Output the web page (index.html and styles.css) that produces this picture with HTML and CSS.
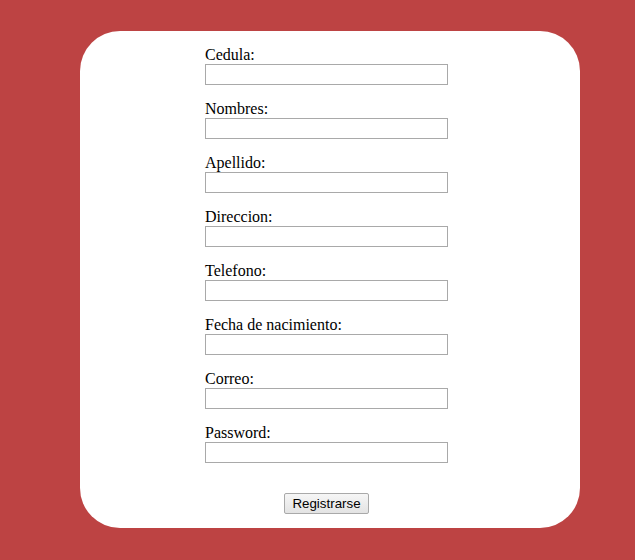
FILE: index.html
```html
<!DOCTYPE html>
<html>
<head>
<meta charset="utf-8">
<link rel="stylesheet" href="styles.css">
</head>
<body>
<div class="card">
  <form class="form">
    <div class="field"><label class="lbl">Cedula:</label><input class="inp" type="text"></div>
    <div class="field"><label class="lbl">Nombres:</label><input class="inp" type="text"></div>
    <div class="field"><label class="lbl">Apellido:</label><input class="inp" type="text"></div>
    <div class="field"><label class="lbl">Direccion:</label><input class="inp" type="text"></div>
    <div class="field"><label class="lbl">Telefono:</label><input class="inp" type="text"></div>
    <div class="field"><label class="lbl">Fecha de nacimiento:</label><input class="inp" type="text"></div>
    <div class="field"><label class="lbl">Correo:</label><input class="inp" type="text"></div>
    <div class="field"><label class="lbl">Password:</label><input class="inp" type="password"></div>
    <div class="actions"><button class="btn" type="button">Registrarse</button></div>
  </form>
</div>
</body>
</html>
```
FILE: styles.css
```css
html, body {
  margin: 0;
  padding: 0;
  background: #bd4343;
  height: 100%;
}
body {
  padding-top: 31px;
  box-sizing: border-box;
  font-family: "Liberation Serif", "Times New Roman", serif;
  font-size: 16px;
  color: #000;
}
.card {
  margin-left: 80px;
  width: 500px;
  height: 497px;
  box-sizing: border-box;
  background: #fff;
  border-radius: 40px;
  padding: 15px 0 0 125px;
}
.form {
  width: 243px;
  display: flex;
  flex-direction: column;
  gap: 15px;
  margin: 0;
}
.field {
  display: flex;
  flex-direction: column;
}
.lbl {
  display: block;
  line-height: 18px;
  height: 18px;
}
.inp {
  box-sizing: border-box;
  width: 243px;
  height: 21px;
  margin: 0;
  border: 1px solid #a9a9a9;
  padding: 1px 2px;
  font-size: 13.33px;
  background: #fff;
}
.actions {
  display: flex;
  justify-content: center;
  margin-top: 15px;
}
.btn {
  box-sizing: border-box;
  height: 21px;
  padding: 1px 7px;
  font-family: "Liberation Sans", Arial, sans-serif;
  font-size: 13.33px;
  color: #000;
  background: linear-gradient(#f6f6f6, #e3e3e3);
  border: 1px solid #a9a9a9;
  border-radius: 2px;
}
```
